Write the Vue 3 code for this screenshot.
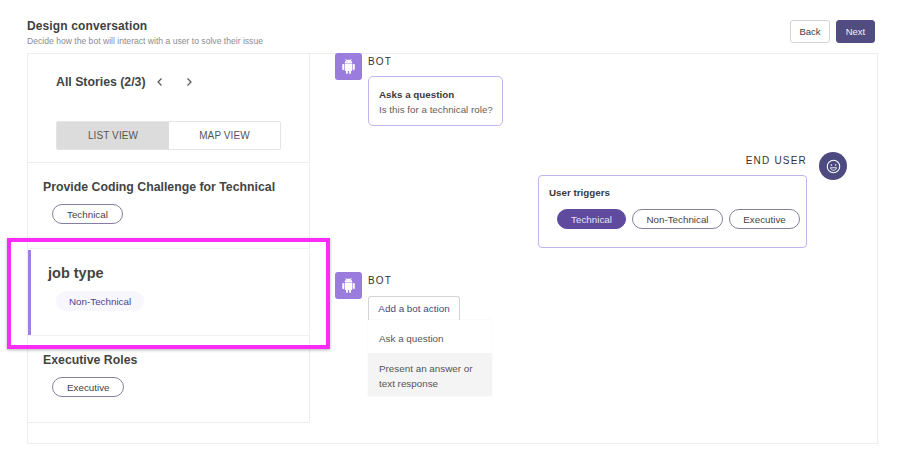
<script setup>
const androidPath = "M6 18c0 .55.45 1 1 1h1v3.5c0 .83.67 1.5 1.5 1.5s1.5-.67 1.5-1.5V19h2v3.5c0 .83.67 1.5 1.5 1.5s1.5-.67 1.5-1.5V19h1c.55 0 1-.45 1-1V8H6v10zM3.5 8C2.67 8 2 8.67 2 9.5v7c0 .83.67 1.5 1.5 1.5S5 17.33 5 16.5v-7C5 8.67 4.33 8 3.5 8zm17 0c-.83 0-1.5.67-1.5 1.5v7c0 .83.67 1.5 1.5 1.5s1.5-.67 1.5-1.5v-7c0-.83-.67-1.5-1.5-1.5zm-4.97-5.84l1.3-1.3c.2-.2.2-.51 0-.71-.2-.2-.51-.2-.71 0l-1.48 1.48C13.85 1.23 12.95 1 12 1c-.96 0-1.86.23-2.66.63L7.85.15c-.2-.2-.51-.2-.71 0-.2.2-.2.51 0 .71l1.31 1.31C6.97 3.26 6 5.01 6 7h12c0-1.99-.97-3.75-2.47-4.84zM10 5H9V4h1v1zm5 0h-1V4h1v1z";
</script>

<template>
  <div class="page">
    <header class="header">
      <div class="heading">
        <h1>Design conversation</h1>
        <p>Decide how the bot will interact with a user to solve their issue</p>
      </div>
      <div class="actions">
        <button class="btn back">Back</button>
        <button class="btn next">Next</button>
      </div>
    </header>

    <main class="card">
      <aside class="side">
        <div class="side-top">
          <div class="stories">
            <span class="stories-title">All Stories (2/3)</span>
            <svg class="chev" viewBox="0 0 10 10" width="10" height="10"><path d="M6.5 1.5 3 5l3.5 3.5" /></svg>
            <svg class="chev chev-next" viewBox="0 0 10 10" width="10" height="10"><path d="M3.5 1.5 7 5 3.5 8.5" /></svg>
          </div>
          <div class="toggle">
            <div class="toggle-item active">LIST VIEW</div>
            <div class="toggle-item">MAP VIEW</div>
          </div>
        </div>

        <section class="story first">
          <h2>Provide Coding Challenge for Technical</h2>
          <span class="pill">Technical</span>
        </section>
        <section class="story selected">
          <h2>job type</h2>
          <span class="pill soft">Non-Technical</span>
        </section>
        <section class="story last">
          <h2>Executive Roles</h2>
          <span class="pill">Executive</span>
        </section>
      </aside>

      <div class="chat">
        <div class="bot-row">
          <div class="bot-avatar">
            <svg viewBox="0 0 24 24" width="15" height="15" fill="#fff"><path :d="androidPath" /></svg>
          </div>
          <div class="bot-body">
            <div class="who">BOT</div>
            <div class="bubble">
              <strong>Asks a question</strong>
              <span>Is this for a technical role?</span>
            </div>
          </div>
        </div>

        <div class="user-row">
          <div class="user-body">
            <div class="who">END USER</div>
            <div class="triggers">
              <strong>User triggers</strong>
              <div class="trigger-pills">
                <span class="pill on">Technical</span>
                <span class="pill">Non-Technical</span>
                <span class="pill">Executive</span>
              </div>
            </div>
          </div>
          <div class="user-avatar">
            <svg viewBox="0 0 24 24" width="15" height="15" fill="none" stroke="#fff" stroke-width="1.7">
              <circle cx="12" cy="12" r="10" />
              <circle cx="8.6" cy="9.6" r="1.3" fill="#fff" stroke="none" />
              <circle cx="15.4" cy="9.6" r="1.3" fill="#fff" stroke="none" />
              <path d="M7 14h10c-.6 2.600-2.600 4-5 4s-4.400-1.400-5-4z" stroke-width="1.400" />
            </svg>
          </div>
        </div>

        <div class="bot-row second">
          <div class="bot-avatar">
            <svg viewBox="0 0 24 24" width="15" height="15" fill="#fff"><path :d="androidPath" /></svg>
          </div>
          <div class="bot-body">
            <div class="who">BOT</div>
            <div class="tab">Add a bot action</div>
            <ul class="menu">
              <li>Ask a question</li>
              <li class="hover">Present an answer or text response</li>
            </ul>
          </div>
        </div>
      </div>
    </main>

    <div class="highlight"></div>
  </div>
</template>

<style scoped>
.page {
  position: relative;
  width: 910px;
  height: 449px;
  overflow: hidden;
  background: #fff;
  font-family: "Liberation Sans", Arial, sans-serif;
  color: #3c3c3c;
  box-sizing: border-box;
}
.header {
  height: 53px;
  padding: 0 35px 0 27px;
  display: flex;
  justify-content: space-between;
  box-sizing: border-box;
}
.heading h1 {
  margin: 19px 0 0;
  font-size: 12px;
  line-height: 15px;
  font-weight: 700;
  letter-spacing: 0.12px;
  color: #3f3f3f;
}
.heading p {
  margin: 1px 0 0;
  font-size: 8.6px;
  line-height: 12px;
  color: #8c8c8c;
}
.actions {
  display: flex;
  gap: 6px;
  padding-top: 20px;
}
.btn {
  height: 23px;
  border-radius: 3px;
  font: 9.5px "Liberation Sans", Arial, sans-serif;
  padding: 0;
  box-sizing: border-box;
}
.back {
  width: 40px;
  background: #fff;
  border: 1px solid #d4d4d4;
  color: #3c3c3c;
}
.next {
  width: 39px;
  background: #514c82;
  border: 1px solid #514c82;
  color: #f2f2f7;
}
.card {
  margin-left: 27px;
  width: 851px;
  height: 391px;
  border: 1px solid #eeeeee;
  box-sizing: border-box;
  display: flex;
  align-items: flex-start;
}
.side {
  width: 282px;
  height: 369px;
  flex: none;
  box-sizing: border-box;
  border-right: 1px solid #eeeeee;
  border-bottom: 1px solid #eeeeee;
}
.side-top {
  height: 109px;
  box-sizing: border-box;
  padding: 20px 0 0 28px;
  border-bottom: 1px solid #eeeeee;
}
.stories {
  display: flex;
  align-items: center;
  height: 16px;
}
.stories-title {
  font-size: 12.3px;
  font-weight: 700;
  color: #444;
  width: 99px;
  white-space: nowrap;
}
.chev {
  fill: none;
  stroke: #555;
  stroke-width: 1.2;
  margin-top: -1px;
}
.chev-next {
  margin-left: 19px;
}
.toggle {
  margin-top: 31px;
  width: 225px;
  height: 29px;
  display: flex;
  border: 1px solid #e4e4e4;
  border-radius: 2px;
  box-sizing: border-box;
}
.toggle-item {
  flex: 1;
  display: flex;
  align-items: center;
  justify-content: center;
  font-size: 10px;
  color: #555;
  letter-spacing: 0.1px;
}
.toggle-item.active {
  flex: 0 0 112px;
  background: #dcdcdc;
}
.story h2 {
  margin: 0;
  font-size: 12.3px;
  font-weight: 700;
  line-height: 16px;
  color: #444;
}
.pill {
  display: inline-flex;
  align-items: center;
  justify-content: center;
  height: 20px;
  padding: 0 14px;
  border: 1px solid #83809f;
  border-radius: 10px;
  box-sizing: border-box;
  font-size: 9.8px;
  color: #444;
  white-space: nowrap;
}
.story.first {
  height: 86px;
  padding: 16px 0 0 15px;
  box-sizing: border-box;
  border-bottom: 1px solid #f2f2f2;
}
.story.first .pill, .story.last .pill {
  margin: 9px 0 0 9px;
}
.story.selected {
  height: 85px;
  margin-top: 1px;
  padding: 15px 0 0 17px;
  border-left: 3px solid #a07fe2;
  box-sizing: border-box;
}
.story.selected h2 {
  font-size: 14.5px;
}
.pill.soft {
  margin: 10px 0 0 8px;
  padding: 0 12px;
  background: #f8f7fd;
  border-color: #f8f7fd;
  color: #4d3f92;
}
.story.last {
  padding: 16px 0 0 15px;
  border-top: 1px solid #f2f2f2;
}
.chat {
  flex: 1;
  min-width: 0;
  margin-top: -1px;
  padding: 0 30px 0 25px;
}
.bot-row {
  display: flex;
  gap: 6px;
}
.bot-row.second {
  margin-top: 24px;
}
.bot-avatar {
  width: 27px;
  height: 27px;
  flex: none;
  border-radius: 3px;
  background: #9a7cdc;
  display: flex;
  align-items: center;
  justify-content: center;
}
.who {
  font-size: 10px;
  line-height: 12px;
  letter-spacing: 1.2px;
  color: #333;
  margin-top: 3px;
}
.bubble {
  margin-top: 8px;
  width: 135px;
  height: 50px;
  box-sizing: border-box;
  border: 1px solid #c3b3ec;
  border-radius: 5px;
  padding: 11px 0 0 10px;
  display: flex;
  flex-direction: column;
  gap: 2px;
  background: #fff;
}
.bubble strong, .triggers strong {
  font-size: 9.8px;
  line-height: 13px;
  color: #3a3a3a;
}
.bubble span {
  font-size: 9.8px;
  line-height: 13px;
  color: #5f5f5f;
}
.user-row {
  display: flex;
  justify-content: flex-end;
  gap: 12px;
  margin-top: 26px;
  height: 96px;
}
.user-body {
  display: flex;
  flex-direction: column;
  align-items: flex-end;
}
.user-body .who {
  margin-top: 2px;
  line-height: 14px;
}
.user-avatar {
  width: 28px;
  height: 28px;
  flex: none;
  border-radius: 50%;
  background: #4d4a7f;
  display: flex;
  align-items: center;
  justify-content: center;
}
.triggers {
  margin-top: 7px;
  width: 269px;
  height: 73px;
  box-sizing: border-box;
  border: 1px solid #c3b3ec;
  border-radius: 4px;
  padding: 10px 0 0 10px;
  display: flex;
  flex-direction: column;
}
.trigger-pills {
  display: flex;
  gap: 6px;
  margin: 10px 0 0 8px;
}
.trigger-pills .pill:nth-child(1) { width: 69px; padding: 0; }
.trigger-pills .pill:nth-child(2) { width: 91px; padding: 0; }
.trigger-pills .pill:nth-child(3) { width: 71px; padding: 0; }
.pill.on {
  background: #5f4a9e;
  border-color: #5f4a9e;
  color: #e6e2f5;
}
.tab {
  margin-top: 9px;
  width: 92px;
  height: 24px;
  box-sizing: border-box;
  border: 1px solid #d4d4d8;
  border-bottom: none;
  border-radius: 3px 3px 0 0;
  display: flex;
  align-items: center;
  justify-content: center;
  font-size: 9.9px;
  color: #4d4680;
}
.menu {
  list-style: none;
  margin: 0;
  padding: 0;
  width: 124px;
  height: 76px;
  font-size: 9.85px;
  line-height: 15px;
  color: #555;
  background: #fff;
  box-shadow: 0 0 1px rgba(0, 0, 0, 0.1);
}
.menu li {
  padding: 11px 10px 0 11px;
  box-sizing: border-box;
  height: 33px;
}
.menu li.hover {
  height: 43px;
  padding: 7.5px 10px 0 11px;
  background: #f4f4f4;
}
.highlight {
  position: absolute;
  left: 7px;
  top: 238px;
  width: 323px;
  height: 111px;
  box-sizing: border-box;
  border: 4px solid #fc2cf8;
  box-shadow: 0 1px 3px rgba(0, 0, 0, 0.3);
  pointer-events: none;
}
</style>
